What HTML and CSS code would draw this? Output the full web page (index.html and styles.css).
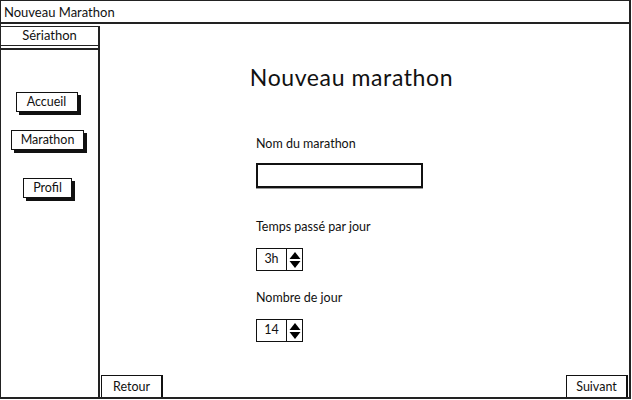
FILE: index.html
```html
<!DOCTYPE html>
<html>
<head>
<meta charset="utf-8">
<link rel="stylesheet" href="styles.css">
</head>
<body>
<div class="window">
  <div class="titlebar">Nouveau Marathon</div>
  <div class="body">
    <div class="side">
      <div class="tab">Sériathon</div>
      <div class="sidebox">
        <button class="btn b-acc">Accueil</button>
        <button class="btn b-mar">Marathon</button>
        <button class="btn b-pro">Profil</button>
      </div>
    </div>
    <div class="main">
      <h1 class="title">Nouveau marathon</h1>
      <div class="form">
        <div class="label l1">Nom du marathon</div>
        <div class="input"></div>
        <div class="label l2">Temps passé par jour</div>
        <div class="spin"><span class="val">3h</span><span class="arr"><svg width="14" height="20" viewBox="0 0 14 20"><path d="M7 2 L12.5 9 H1.5 Z" fill="#000"/><path d="M7 18 L12.5 11 H1.5 Z" fill="#000"/></svg></span></div>
        <div class="label l3">Nombre de jour</div>
        <div class="spin"><span class="val">14</span><span class="arr"><svg width="14" height="20" viewBox="0 0 14 20"><path d="M7 2 L12.5 9 H1.5 Z" fill="#000"/><path d="M7 18 L12.5 11 H1.5 Z" fill="#000"/></svg></span></div>
      </div>
      <div class="footer">
        <button class="fbtn">Retour</button>
        <button class="fbtn">Suivant</button>
      </div>
    </div>
  </div>
</div>
</body>
</html>
```
FILE: styles.css
```css
* { box-sizing: border-box; }
html, body { margin: 0; padding: 0; background: #fff; }
body { width: 632px; height: 400px; overflow: hidden; font-family: "Lato", "Open Sans", sans-serif; color: #111; }
.window { width: 631px; height: 399px; border: 2px solid #222; border-top-width: 1px; border-left-width: 1px; display: flex; flex-direction: column; }
.titlebar { height: 23px; border-bottom: 2px solid #222; font-size: 13px; padding: 4px 0 0 3px; line-height: 15px; }
.body { flex: 1; display: flex; padding-top: 2px; }
.side { width: 97px; display: flex; flex-direction: column; }
.tab { height: 20px; border: 1.5px solid #222; border-left: none; border-right: none; text-align: center; font-size: 13px; line-height: 17px; margin-bottom: 2px; }
.sidebox { flex: 1; border-top: 2px solid #222; display: flex; flex-direction: column; align-items: center; padding-top: 42px; padding-right: 4px; }
.btn { font-family: inherit; font-size: 12.5px; color: #111; background: #fff; border: 1.5px solid #111; box-shadow: 3px 3px 0 #111; padding: 0; height: 20px; line-height: 16px; }
.b-acc { width: 62px; margin-left: -2px; }
.b-mar { width: 73px; margin-top: 18px; }
.b-pro { width: 49px; margin-top: 28px; }
.main { flex: 1; border-left: 2px solid #222; display: flex; flex-direction: column; }
.title { font-weight: normal; font-size: 23px; margin: 38px 0 0 0; text-align: center; letter-spacing: 0.6px; line-height: 26px; padding-right: 26px; }
.form { padding-left: 156px; display: flex; flex-direction: column; align-items: flex-start; flex: 1; }
.label { font-size: 12.5px; line-height: 15px; }
.l1 { margin-top: 46px; }
.l2 { margin-top: 31px; }
.l3 { margin-top: 19px; }
.input { margin-top: 12px; width: 167px; height: 25px; border: 2px solid #111; box-shadow: 0 1px 0 #999; }
.spin { margin-top: 14px; width: 47px; height: 23px; border: 1.5px solid #111; display: flex; font-size: 12.5px; }
.val { width: 30px; border-right: 1.5px solid #111; text-align: center; line-height: 20px; }
.arr { flex: 1; display: flex; align-items: center; justify-content: center; }
.footer { display: flex; justify-content: space-between; padding: 0 1px 0 1px; }
.fbtn { font-family: inherit; font-size: 12.5px; color: #111; background: #fff; border: 1.5px solid #111; border-right-width: 2.5px; border-bottom: none; padding: 0; height: 22px; width: 62px; line-height: 18px; }
```
